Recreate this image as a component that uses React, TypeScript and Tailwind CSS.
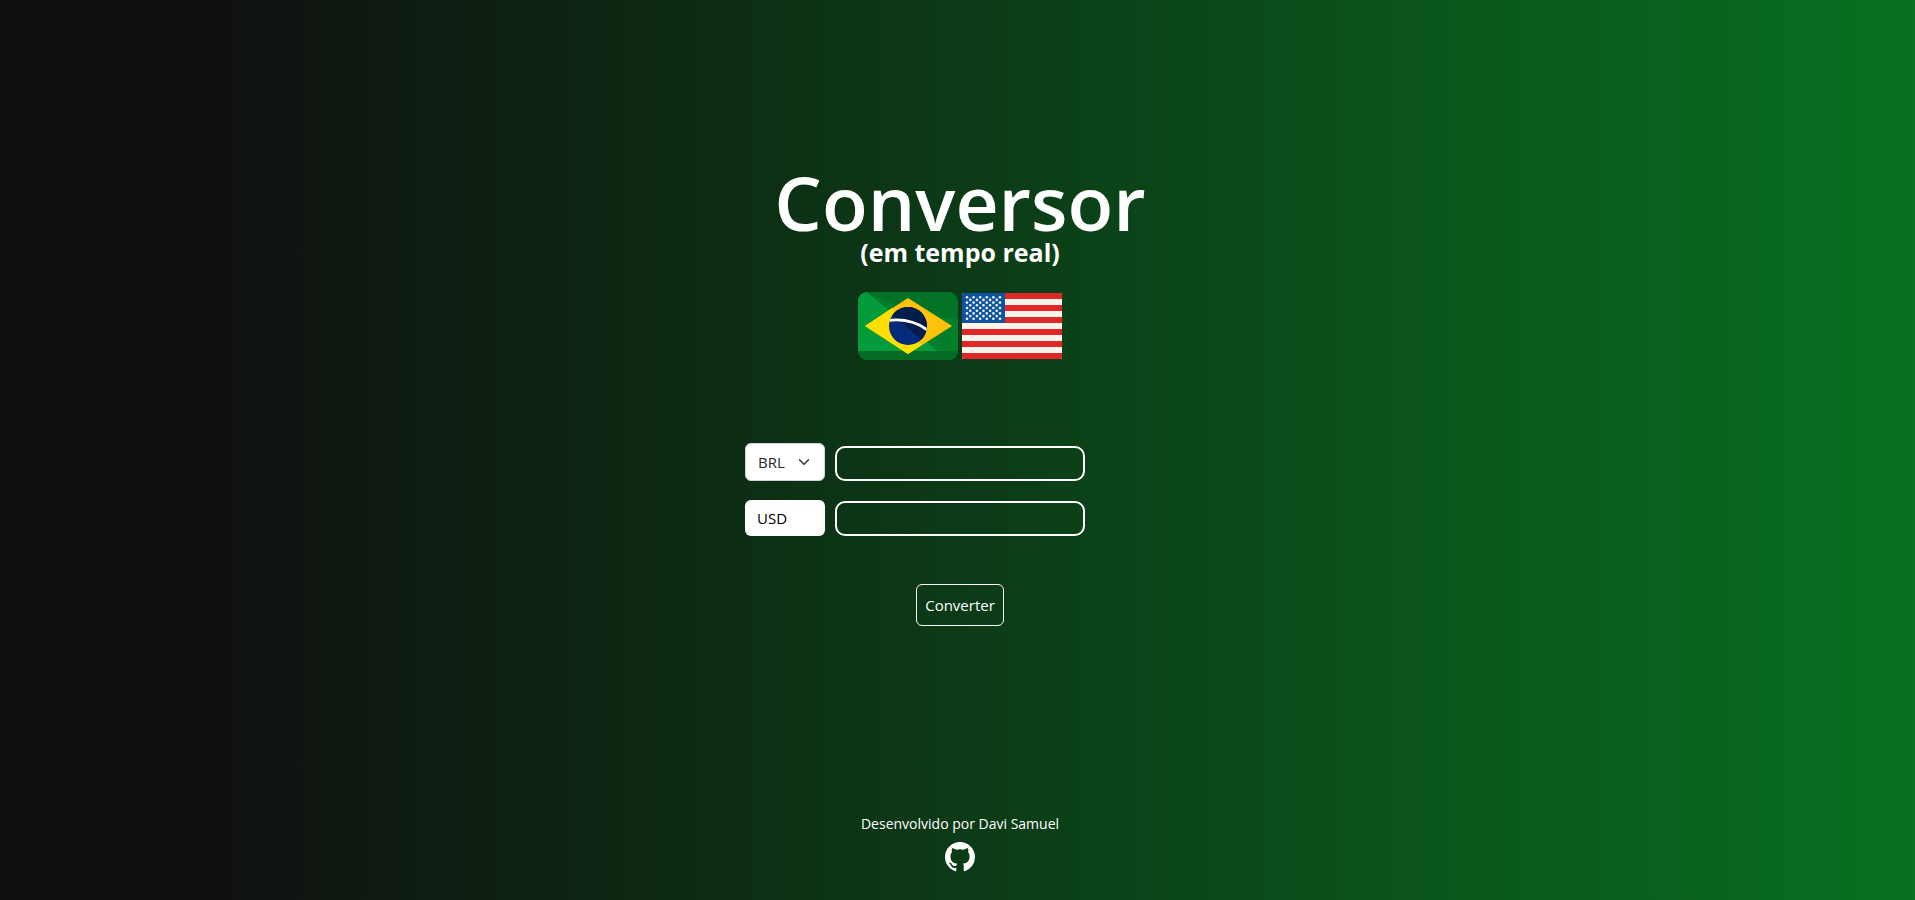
import { useState } from "react";
import type { FormEvent } from "react";

function BrazilFlag() {
  return (
    <svg viewBox="0 0 100 68" className="h-17 w-25" role="img" aria-label="Brasil">
      <defs>
        <clipPath id="br-body">
          <rect width="100" height="68" rx="9" />
        </clipPath>
        <clipPath id="br-globe">
          <circle cx="50" cy="34" r="19" />
        </clipPath>
      </defs>
      <g clipPath="url(#br-body)">
        <rect width="100" height="68" fill="#027227" />
        <path d="M0 0H9L80 59H0Z" fill="#049b3a" />
        <path d="M9 0 80 59H100V27C60 22 30 12 9 0Z" fill="#037f2c" />
        <rect y="59" width="100" height="9" fill="#046c22" />
      </g>
      <path d="M50 6 94 34 50 62 7 34Z" fill="#fec20a" />
      <path d="M34 16 7 34 50 62 64 53Z" fill="#fddf04" />
      <circle cx="50" cy="34" r="19" fill="#062a7c" />
      <g clipPath="url(#br-globe)">
        <path d="M31 20 66 50 72 34 60 12H35Z" fill="#031d4d" />
        <path d="M30 28.500C45 26.500 59 30 70 38.500" fill="none" stroke="#fff" strokeWidth="2.800" />
      </g>
    </svg>
  );
}

const redStripes = [0, 12, 24, 36, 48, 60];
const starRows = [0, 1, 2, 3, 4, 5, 6, 7, 8];

function UsaFlag() {
  return (
    <svg viewBox="0 0 100 66" className="h-[66px] w-25 rounded-xs" role="img" aria-label="Estados Unidos">
      <rect width="100" height="66" fill="#fff3ea" />
      {redStripes.map((y) => (
        <rect key={y} y={y} width="100" height="6" fill="#df2727" />
      ))}
      <rect width="43" height="30" fill="#0f529f" />
      {starRows.map((row) =>
        Array.from({ length: row % 2 ? 5 : 6 }, (_, col) => (
          <circle
            key={`${row}-${col}`}
            cx={5 + col * 6.6 + (row % 2 ? 3.3 : 0)}
            cy={4.2 + row * 2.7}
            r="1.300"
            fill="#eef4fb"
          />
        )),
      )}
    </svg>
  );
}

function GithubMark() {
  return (
    <svg viewBox="0 0 16 16" className="size-[30px]" fill="currentColor" aria-hidden="true">
      <path d="M8 0C3.580 0 0 3.580 0 8c0 3.540 2.290 6.530 5.470 7.590.4.070.55-.17.55-.38 0-.19-.01-.82-.01-1.490-2.010.37-2.530-.49-2.690-.94-.09-.23-.48-.94-.82-1.130-.28-.15-.68-.52-.01-.53.63-.01 1.080.58 1.230.82.72 1.210 1.870.87 2.330.66.070-.52.28-.87.51-1.070-1.780-.2-3.640-.89-3.640-3.950 0-.87.31-1.590.82-2.150-.08-.2-.36-1.020.08-2.120 0 0 .67-.21 2.200.82.64-.18 1.320-.27 2-.27s1.360.09 2 .27c1.530-1.040 2.200-.82 2.200-.82.44 1.100.16 1.920.08 2.120.51.56.82 1.270.82 2.150 0 3.070-1.870 3.750-3.650 3.950.29.25.54.73.54 1.480 0 1.070-.01 1.930-.01 2.200 0 .21.15.46.55.38A8.010 8.010 0 0 0 16 8c0-4.420-3.580-8-8-8" />
    </svg>
  );
}

export default function App() {
  const [amount, setAmount] = useState("");
  const [result, setResult] = useState("");
  const handleSubmit = (event: FormEvent) => {
    event.preventDefault();
    setResult(amount);
  };

  return (
    <div className="flex min-h-screen flex-col items-center bg-linear-to-r/srgb from-[#0f0f0f] from-10% to-[#087020] pt-[162px] pb-7 pl-[5px] font-['Open_Sans','Noto_Sans',sans-serif] text-white">
      <header className="flex flex-col items-center">
        <h1 className="flex flex-col items-center">
          <span className="text-[75px] leading-20 font-semibold">Conversor</span>
          <span className="text-[25px] leading-5 font-bold">(em tempo real)</span>
        </h1>
        <div className="mt-[30px] flex items-center gap-1">
          <BrazilFlag />
          <UsaFlag />
        </div>
      </header>

      <main className="mt-[83px]">
        <form onSubmit={handleSubmit} className="flex w-[430px] max-w-full flex-col">
          <div className="flex items-end gap-2.5">
            <div className="grid w-20 items-center">
              <select
                aria-label="Moeda de origem"
                className="col-start-1 row-start-1 h-[38px] appearance-none rounded-md border border-[#ced4da] bg-white pl-3 text-[15px] text-[#212529]"
              >
                <option>BRL</option>
                <option>USD</option>
              </select>
              <svg
                viewBox="0 0 16 16"
                className="pointer-events-none col-start-1 row-start-1 mr-[15px] size-3 justify-self-end"
                fill="none"
                stroke="#343a40"
                strokeWidth="2"
                strokeLinecap="round"
                strokeLinejoin="round"
                aria-hidden="true"
              >
                <path d="m2 5 6 6 6-6" />
              </svg>
            </div>
            <input
              aria-label="Valor em BRL"
              value={amount}
              onChange={(event) => setAmount(event.target.value)}
              className="h-[35px] w-[250px] rounded-[10px] border-2 border-white bg-transparent px-2 outline-none"
            />
          </div>
          <div className="mt-[19px] flex items-end gap-2.5">
            <label
              htmlFor="result"
              className="flex h-9 w-20 items-center rounded-md bg-white pl-3 text-[15px] text-black"
            >
              USD
            </label>
            <input
              id="result"
              readOnly
              value={result}
              className="h-[35px] w-[250px] rounded-[10px] border-2 border-white bg-transparent px-2 outline-none"
            />
          </div>
          <button
            type="submit"
            className="mt-12 h-[42px] w-22 self-center rounded-md border border-white text-[15px]"
          >
            Converter
          </button>
        </form>
      </main>

      <footer className="mt-auto flex flex-col items-center gap-1.5 text-sm leading-6">
        <p>Desenvolvido por Davi Samuel</p>
        <a href="https://github.com" aria-label="GitHub">
          <GithubMark />
        </a>
      </footer>
    </div>
  );
}
